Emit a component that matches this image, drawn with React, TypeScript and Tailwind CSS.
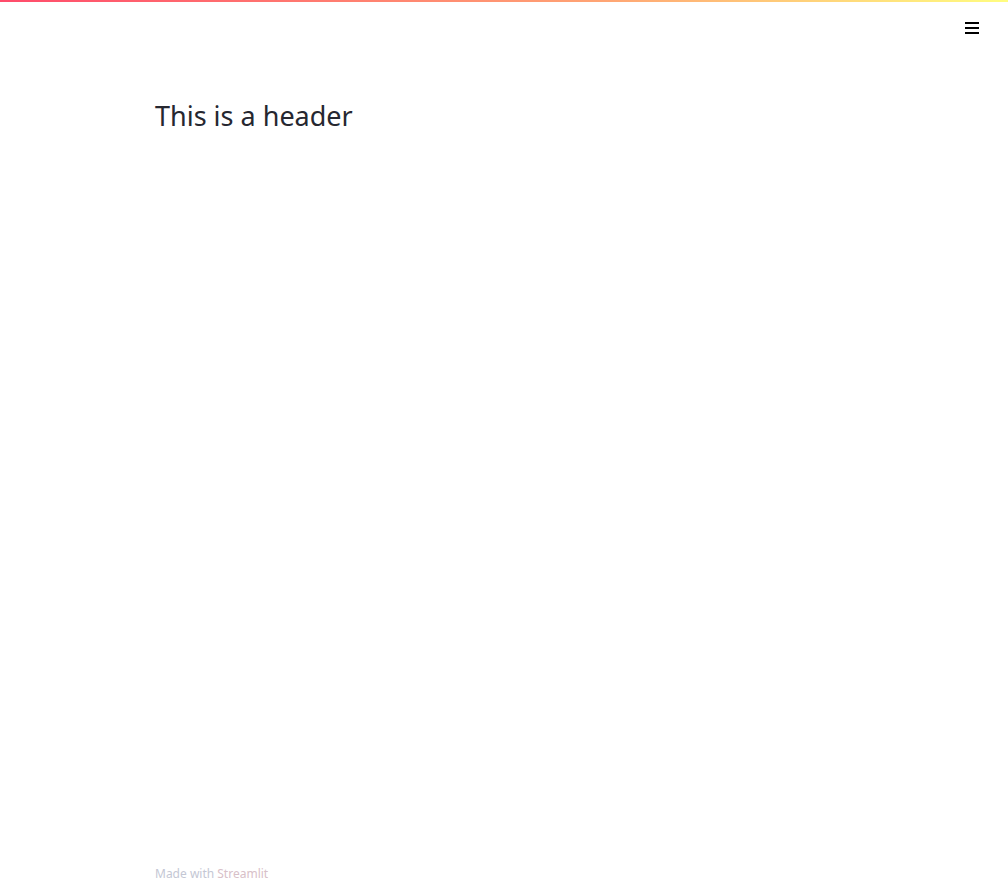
import React from "react";

export default function App() {
  return (
    <div className="relative flex min-h-[892px] flex-col bg-white">
      <div className="h-[2px] w-full bg-[linear-gradient(90deg,#ff4b6b,#ffa574_60%,#fffd80)]" />
      <div className="flex justify-end pr-[29px] pt-[19px]">
        <button className="flex h-[14px] w-[14px] flex-col justify-between py-[1px]">
          <span className="block h-[2px] w-[14px] bg-black" />
          <span className="block h-[2px] w-[14px] bg-black" />
          <span className="block h-[2px] w-[14px] bg-black" />
        </button>
      </div>
      <main className="mx-auto flex w-full max-w-[730px] flex-1 flex-col px-4">
        <h2 className="mt-[63px] text-[27px] leading-[36px] font-normal text-[#262730] [font-family:'Noto_Sans',sans-serif]">
          This is a header
        </h2>
        <div className="flex-1" />
        <footer className="pb-[10px] text-[12px] leading-[16px] text-[#c4c7d4] [font-family:'Noto_Sans',sans-serif]">
          Made with <span className="text-[#d8c0c8]">Streamlit</span>
        </footer>
      </main>
    </div>
  );
}
